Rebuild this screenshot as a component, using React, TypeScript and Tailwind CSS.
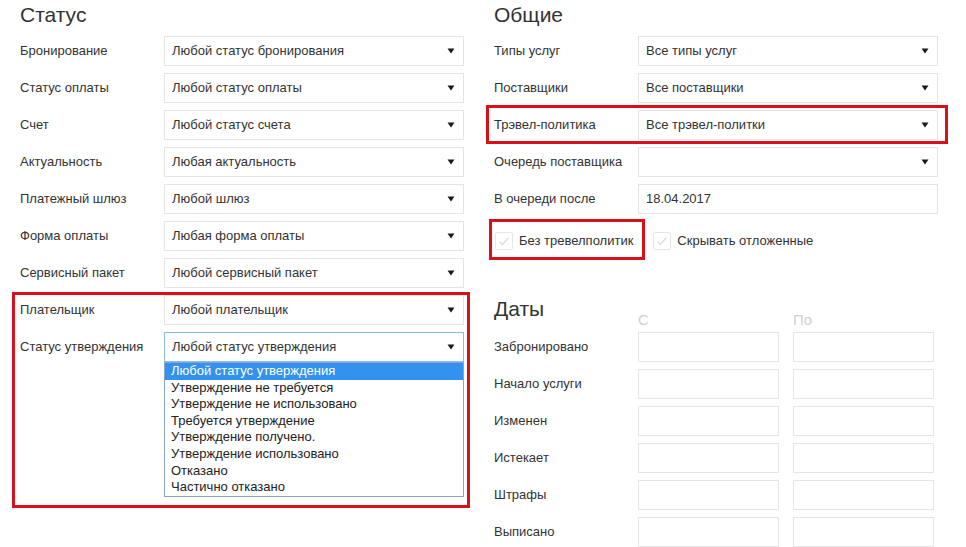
type Row = { label: string; value: string }

const statusRows: Row[] = [
  { label: 'Бронирование', value: 'Любой статус бронирования' },
  { label: 'Статус оплаты', value: 'Любой статус оплаты' },
  { label: 'Счет', value: 'Любой статус счета' },
  { label: 'Актуальность', value: 'Любая актуальность' },
  { label: 'Платежный шлюз', value: 'Любой шлюз' },
  { label: 'Форма оплаты', value: 'Любая форма оплаты' },
  { label: 'Сервисный пакет', value: 'Любой сервисный пакет' },
  { label: 'Плательщик', value: 'Любой плательщик' },
]

const approvalOptions = [
  'Любой статус утверждения',
  'Утверждение не требуется',
  'Утверждение не использовано',
  'Требуется утверждение',
  'Утверждение получено.',
  'Утверждение использовано',
  'Отказано',
  'Частично отказано',
]

const dateRows = ['Забронировано', 'Начало услуги', 'Изменен', 'Истекает', 'Штрафы', 'Выписано']

function Arrow() {
  return (
    <svg width="8" height="6" viewBox="0 0 8 6" className="shrink-0">
      <path d="M0.5 0.5 L7.5 0.5 L4 5.5 Z" fill="#1a1a1a" />
    </svg>
  )
}

function Select({ value, focused }: { value: string; focused?: boolean }) {
  return (
    <div
      className={`flex items-center justify-between w-[300px] h-[30px] pl-[7px] pr-[8px] bg-white border ${
        focused ? 'border-[#8fbbe8]' : 'border-[#e4e4e4]'
      }`}
    >
      <span className="text-[13px] text-[#333]">{value}</span>
      <Arrow />
    </div>
  )
}

function FieldRow({ label, children }: { label: string; children: React.ReactNode }) {
  return (
    <div className="flex items-center h-[30px]">
      <span className="w-[144px] shrink-0 text-[13px] text-[#333]">{label}</span>
      {children}
    </div>
  )
}

function Checkbox({ label }: { label: string }) {
  return (
    <div className="flex items-center gap-[6px]">
      <span className="flex items-center justify-center w-[18px] h-[18px] border border-[#e6e6e6] rounded-[2px] bg-white">
        <svg width="12" height="10" viewBox="0 0 12 10">
          <path d="M1.5 5.5 L4.5 8.5 L10.5 1.5" fill="none" stroke="#dcdcdc" strokeWidth="1.3" />
        </svg>
      </span>
      <span className="text-[13px] text-[#333]">{label}</span>
    </div>
  )
}

export default function App() {
  return (
    <div className="flex w-[966px] h-[547px] bg-white overflow-hidden font-['Liberation_Sans',Arial,sans-serif]">
      {/* Статус */}
      <div className="relative w-[486px] shrink-0 pl-5">
        <h2 className="h-[36px] pt-[3px] text-[21px] leading-[24px] text-[#333] font-normal">Статус</h2>
        <div className="flex flex-col gap-[7px]">
          {statusRows.map((r) => (
            <FieldRow key={r.label} label={r.label}>
              <Select value={r.value} />
            </FieldRow>
          ))}
          <FieldRow label="Статус утверждения">
            <Select value="Любой статус утверждения" focused />
          </FieldRow>
        </div>

        <div className="absolute left-[164px] top-[362px] w-[300px] h-[135px] bg-white border border-[#8aa6c4] text-[13px] leading-[16.6px] text-[#222]">
          {approvalOptions.map((o, i) => (
            <div
              key={o}
              className={`pl-[6px] ${i === 0 ? 'bg-[#3392f0] text-white' : ''}`}
            >
              {o}
            </div>
          ))}
        </div>

        <div className="absolute left-[12px] top-[292px] w-[458px] h-[216px] border-[3px] border-[#d8101c] pointer-events-none" />
      </div>

      {/* Общие + Даты */}
      <div className="relative flex-1 pl-2">
        <h2 className="h-[36px] pt-[3px] text-[21px] leading-[24px] text-[#333] font-normal">Общие</h2>
        <div className="flex flex-col gap-[7px]">
          <FieldRow label="Типы услуг">
            <Select value="Все типы услуг" />
          </FieldRow>
          <FieldRow label="Поставщики">
            <Select value="Все поставщики" />
          </FieldRow>
          <FieldRow label="Трэвел-политика">
            <Select value="Все трэвел-политки" />
          </FieldRow>
          <FieldRow label="Очередь поставщика">
            <Select value="" />
          </FieldRow>
          <FieldRow label="В очереди после">
            <div className="flex items-center w-[300px] h-[30px] pl-[7px] border border-[#e4e4e4] text-[13px] text-[#333]">
              18.04.2017
            </div>
          </FieldRow>
        </div>

        <div className="flex items-center gap-5 mt-[18px] ml-[1px] h-[18px]">
          <Checkbox label="Без тревелполитик" />
          <Checkbox label="Скрывать отложенные" />
        </div>

        <div className="flex items-start mt-[47px] h-[35px]">
          <h2 className="w-[144px] text-[21px] leading-[24px] text-[#333] font-normal">Даты</h2>
          <span className="w-[155px] mt-[14px] text-[15px] leading-[17px] text-[#cfcfcf]">С</span>
          <span className="mt-[14px] text-[15px] leading-[17px] text-[#cfcfcf]">По</span>
        </div>
        <div className="flex flex-col gap-[7px]">
          {dateRows.map((d) => (
            <FieldRow key={d} label={d}>
              <div className="w-[141px] h-[30px] border border-[#e6e6e6]" />
              <div className="w-[141px] h-[30px] ml-[14px] border border-[#e6e6e6]" />
            </FieldRow>
          ))}
        </div>

        <div className="absolute left-0 top-[105px] w-[462px] h-[39px] border-[3px] border-[#d8101c] pointer-events-none" />
        <div className="absolute left-[3px] top-[219px] w-[156px] h-[41px] border-[3px] border-[#d8101c] pointer-events-none" />
      </div>
    </div>
  )
}
